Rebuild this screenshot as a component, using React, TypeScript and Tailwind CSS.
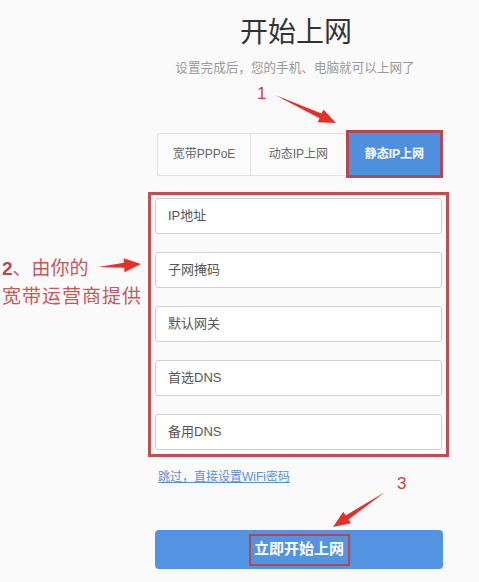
import React from "react"

const font = { fontFamily: '"Liberation Sans", "Noto Sans CJK SC", sans-serif' }

// arrow polygon from tail to tip, thin tail widening into a head
function arrow(x1: number, y1: number, x2: number, y2: number) {
  const dx = x2 - x1
  const dy = y2 - y1
  const len = Math.hypot(dx, dy)
  const ux = dx / len
  const uy = dy / len
  const nx = -uy
  const ny = ux
  const bx = x1 + ux * (len - 17)
  const by = y1 + uy * (len - 17)
  const pts = [
    [x1, y1],
    [bx + nx * 2.5, by + ny * 2.5],
    [bx + nx * 7, by + ny * 7],
    [x2, y2],
    [bx - nx * 7, by - ny * 7],
    [bx - nx * 2.5, by - ny * 2.5],
  ]
  return pts.map((p) => p[0].toFixed(1) + "," + p[1].toFixed(1)).join(" ")
}

const fields = ["IP地址", "子网掩码", "默认网关", "首选DNS", "备用DNS"]

export default function App() {
  return (
    <div className="relative w-[479px] h-[582px] overflow-hidden bg-[#fafafa]" style={font}>
      <div className="ml-[155px] w-[288px] flex flex-col">
        <h1 className="mt-[13px] text-center text-[28px] leading-[40px] text-[#333] ml-[-6px]">开始上网</h1>
        <p className="mt-[5px] ml-[-8px] text-center text-[12.6px] leading-[20px] text-[#999] whitespace-nowrap">设置完成后，您的手机、电脑就可以上网了</p>

        <div className="mt-[52px] ml-[2px] flex items-center">
          <div className="flex h-[43px] w-[190px] rounded-l-[3px] border border-r-0 border-[#e3e3e3] bg-[#fbfbfb] text-[12px] text-[#666]">
            <div className="flex w-[93px] items-center justify-center border-r border-[#e3e3e3]">宽带PPPoE</div>
            <div className="flex flex-1 items-center justify-center">动态IP上网</div>
          </div>
          <div className="flex h-[48px] w-[98px] items-center justify-center border-[3px] border-[#b5474f] bg-[#4f8fe0] text-[12px] font-bold text-white">
            静态IP上网
          </div>
        </div>

        <div className="mt-[14px] ml-[-7px] w-[301px] border-[3px] border-[#c0504d] px-[4px] pt-[3px] pb-[4px] flex flex-col gap-[18px]">
          {fields.map((f) => (
            <div
              key={f}
              className="flex h-[36px] items-center rounded-[3px] border border-[#cfcfcf] bg-white pl-[12px] text-[13px] text-[#555]"
            >
              {f}
            </div>
          ))}
        </div>

        <a href="#" className="mt-[12px] ml-[3px] text-[12px] leading-[16px] text-[#5a8fd0] underline">
          跳过，直接设置WiFi密码
        </a>

        <button className="mt-[45px] flex h-[39px] w-[288px] items-center justify-center rounded-[4px] bg-[#5294e2]">
          <span className="flex h-[32px] w-[101px] items-center justify-center border-[2px] border-[#b5474f] text-[15px] font-bold text-white">
            立即开始上网
          </span>
        </button>
      </div>

      {/* annotations */}
      <span className="absolute left-[257px] top-[84px] text-[17px] leading-[20px] text-[#c9403a]">1</span>
      <div className="absolute left-[2px] top-[256px] text-[19px] leading-[26px] text-[#c45a5a]">
        <div>
          <span className="font-bold text-[#b5474f]">2</span>、由你的
        </div>
        <div className="mt-[2px] tracking-[1px]">宽带运营商提供</div>
      </div>
      <span className="absolute left-[397px] top-[474px] text-[17px] leading-[20px] text-[#c9403a]">3</span>

      <svg className="pointer-events-none absolute left-0 top-0" width="479" height="582">
        <polygon points={arrow(275, 95, 336, 123)} fill="#e5302a" />
        <polygon points={arrow(98, 267, 141, 264)} fill="#e5302a" />
        <polygon points={arrow(385, 492, 333, 527)} fill="#e5302a" />
      </svg>
    </div>
  )
}
